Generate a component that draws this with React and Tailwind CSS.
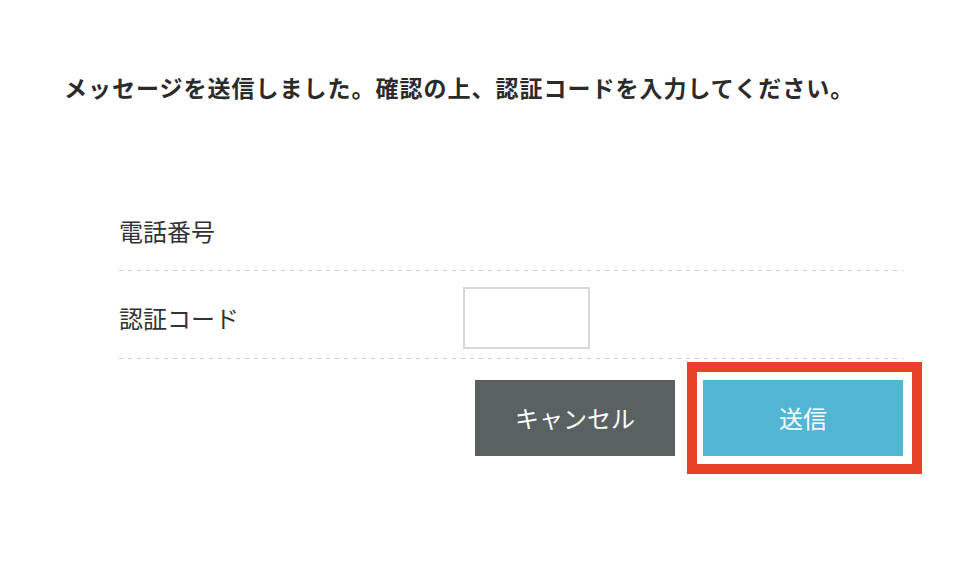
function Divider() {
  return (
    <div className="h-px w-full bg-[linear-gradient(to_right,#cccccc_4px,transparent_4px)] bg-[length:9px_1px] bg-repeat-x" />
  );
}

export default function App() {
  return (
    <div className="min-h-[562px] w-[976px] bg-white font-['Noto_Sans_CJK_JP','Noto_Sans',sans-serif] text-[#333]">
      <div className="px-[64px] pt-[71px]">
        <h1 className="text-[23px] font-bold leading-[32px] tracking-[1px] text-[#2b2b2b]">
          メッセージを送信しました。確認の上、認証コードを入力してください。
        </h1>
      </div>

      <div className="ml-[119px] mt-[91px] w-[784px]">
        <div className="flex h-[76px] items-center pb-[3px]">
          <div className="w-[344px] text-[24px] leading-[32px]">電話番号</div>
        </div>
        <Divider />
        <div className="flex items-center pb-[9px] pt-[16px]">
          <div className="w-[344px] text-[24px] leading-[32px]">認証コード</div>
          <input
            type="text"
            className="box-border h-[62px] w-[127px] border-2 border-[#d8d8d8] bg-white px-2 text-[22px] outline-none"
          />
        </div>
        <Divider />

        <div className="flex items-start justify-end">
          <button
            type="button"
            className="mt-[21px] h-[76px] w-[200px] bg-[#596163] text-[24px] text-white"
          >
            キャンセル
          </button>
          <div className="-mr-[19px] ml-[12px] mt-[3px] border-[10px] border-[#e94128] bg-white pb-[8px] pl-[6px] pr-[9px] pt-[8px]">
            <button
              type="button"
              className="block h-[76px] w-[200px] bg-[#52b5d4] text-[24px] text-white"
            >
              送信
            </button>
          </div>
        </div>
      </div>
    </div>
  );
}
